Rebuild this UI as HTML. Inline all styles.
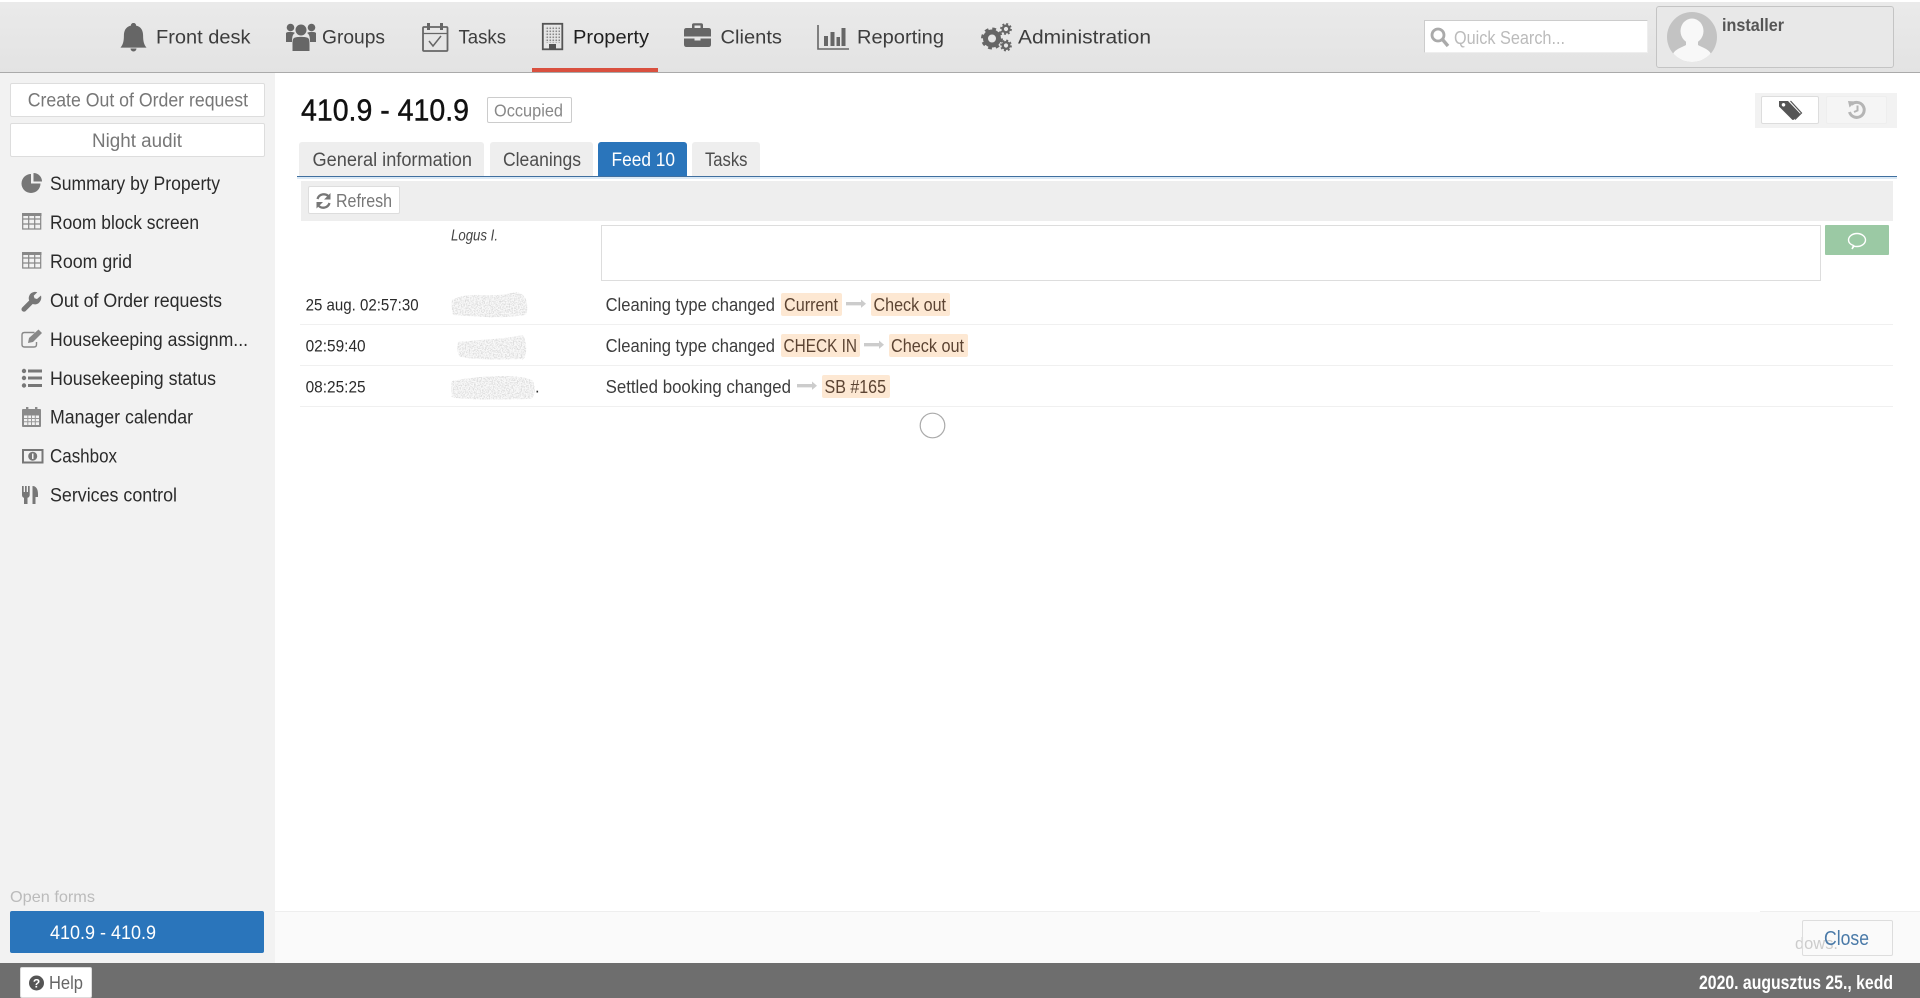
<!DOCTYPE html>
<html lang="en"><head><meta charset="utf-8"><title>410.9 - 410.9</title>
<style>
html,body{margin:0;padding:0;background:#fff;width:1920px;height:998px;overflow:hidden}
.b{position:absolute;box-sizing:border-box}
svg.o{position:absolute;left:0;top:0}
text{font-family:"Liberation Sans",sans-serif;font-size:19px;fill:#333}
.nav{font-size:19.5px;fill:#3d3d3d}
.side{fill:#2b2b2b}
.btn{fill:#777}
.tab{fill:#4d4d4d}
.row{font-size:18.5px;fill:#3d3d3d}
.bd{font-size:18.5px;fill:#5c4433}
.dt{font-size:16.5px;fill:#2b2b2b}
.i{fill:#777}
.n{fill:#666}
</style></head><body>
<!-- header -->
<div class="b" style="left:0;top:2px;width:1920px;height:71px;background:linear-gradient(#eaeaea,#e3e3e3);border-bottom:1.5px solid #aaa"></div>
<div class="b" style="left:532px;top:68px;width:126px;height:4px;background:#d9503f"></div>
<div class="b" style="left:1424px;top:20px;width:224px;height:33px;background:#fff;border:1px solid #ccc;border-right-color:#eee;border-bottom-color:#eee"></div>
<div class="b" style="left:1656px;top:6px;width:238px;height:62px;border:1px solid #c4c4c4;border-radius:3px;background:#e8e8e8"></div>
<!-- sidebar -->
<div class="b" style="left:0;top:73px;width:275px;height:890px;background:#f2f2f2"></div>
<div class="b" style="left:10px;top:83px;width:255px;height:34px;background:#fff;border:1px solid #ddd;border-radius:2px"></div>
<div class="b" style="left:10px;top:123px;width:255px;height:34px;background:#fff;border:1px solid #ddd;border-radius:2px"></div>
<div class="b" style="left:10px;top:911px;width:254px;height:42px;background:#2a75bb;border-radius:2px"></div>
<!-- title tools -->
<div class="b" style="left:487px;top:97px;width:85px;height:26px;border:1px solid #ccc;border-radius:2px"></div>
<div class="b" style="left:1755px;top:93px;width:142px;height:35px;background:#f2f2f2"></div>
<div class="b" style="left:1761px;top:96px;width:58px;height:28px;background:#fff;border:1px solid #ddd;border-radius:2px"></div>
<div class="b" style="left:1826px;top:96px;width:61px;height:28px;background:#f5f5f5;border:1px solid #eee;border-radius:2px"></div>
<!-- tabs -->
<div class="b" style="left:299px;top:142px;width:185px;height:34px;background:#eee;border-radius:3px 3px 0 0"></div>
<div class="b" style="left:490px;top:142px;width:103px;height:34px;background:#eee;border-radius:3px 3px 0 0"></div>
<div class="b" style="left:598px;top:142px;width:89px;height:34px;background:#2a75bb;border-radius:3px 3px 0 0"></div>
<div class="b" style="left:692px;top:142px;width:68px;height:34px;background:#eee;border-radius:3px 3px 0 0"></div>
<div class="b" style="left:297px;top:176px;width:1600px;height:1px;background:#3f6f9f"></div>
<div class="b" style="left:297px;top:177px;width:1600px;height:2px;background:#dbe9f5"></div>
<div class="b" style="left:301px;top:181px;width:1592px;height:40px;background:#eee"></div>
<div class="b" style="left:308px;top:186px;width:92px;height:28px;background:#fff;border:1px solid #ddd;border-radius:2px"></div>
<!-- comment -->
<div class="b" style="left:601px;top:225px;width:1220px;height:56px;background:#fff;border:1.5px solid #ddd"></div>
<div class="b" style="left:1825px;top:225px;width:64px;height:30px;background:#9bc9a4;border-radius:1px"></div>
<!-- feed -->
<div class="b" style="left:300px;top:324px;width:1593px;height:1px;background:#f0f0f0"></div>
<div class="b" style="left:300px;top:365px;width:1593px;height:1px;background:#f0f0f0"></div>
<div class="b" style="left:300px;top:406px;width:1593px;height:1px;background:#f0f0f0"></div>
<div class="b" style="left:781px;top:293px;width:61px;height:23px;background:#fde8d3;border-radius:2px"></div>
<div class="b" style="left:871px;top:293px;width:79px;height:23px;background:#fde8d3;border-radius:2px"></div>
<div class="b" style="left:781px;top:334px;width:79px;height:23px;background:#fde8d3;border-radius:2px"></div>
<div class="b" style="left:889px;top:334px;width:79px;height:23px;background:#fde8d3;border-radius:2px"></div>
<div class="b" style="left:822px;top:375px;width:68px;height:23px;background:#fde8d3;border-radius:2px"></div>
<!-- footer -->
<div class="b" style="left:275px;top:911px;width:1645px;height:52px;background:#fafafa;border-top:1px solid #eee"></div>
<div class="b" style="left:1540px;top:904px;width:220px;height:8px;background:#fff;border-radius:10px 10px 0 0"></div>
<svg class="o" width="1920" height="998"><text x="1795" y="949" style="font-size:17px;fill:#ccc" textLength="43" lengthAdjust="spacingAndGlyphs">dows.</text></svg>
<div class="b" style="left:1802px;top:920px;width:91px;height:36px;border:1px solid #ddd;border-radius:2px"></div>
<div class="b" style="left:0;top:963px;width:1920px;height:35px;background:#6e6e6e"></div>
<div class="b" style="left:20px;top:967px;width:72px;height:31px;background:#fff;border:1px solid #ddd;border-radius:2px"></div>

<svg class="o" width="1920" height="998" viewBox="0 0 1920 998">
<defs>
<pattern id="w" width="3" height="3" patternUnits="userSpaceOnUse"><rect x=".5" y=".5" width="1.6" height="1.6" fill="#888"/></pattern>
<clipPath id="av"><circle cx="1692" cy="37" r="25"/></clipPath>
<filter id="nz" x="0" y="0" width="100%" height="100%"><feTurbulence type="fractalNoise" baseFrequency=".75" numOctaves="2" seed="4" result="t"/><feColorMatrix in="t" type="matrix" values="0 0 0 0 .72  0 0 0 0 .72  0 0 0 0 .72  0 0 0 4 -1.7" result="c"/><feComposite in="c" in2="SourceGraphic" operator="in"/></filter>
</defs>

<!-- nav text -->
<text class="nav" x="156" y="43.5" textLength="94.5" lengthAdjust="spacingAndGlyphs">Front desk</text>
<text class="nav" x="322" y="43.5" textLength="63" lengthAdjust="spacingAndGlyphs">Groups</text>
<text class="nav" x="458.5" y="43.5" textLength="47.5" lengthAdjust="spacingAndGlyphs">Tasks</text>
<text class="nav" x="573" y="43.5" textLength="76" lengthAdjust="spacingAndGlyphs" style="fill:#1f1f1f">Property</text>
<text class="nav" x="720.5" y="43.5" textLength="61.5" lengthAdjust="spacingAndGlyphs">Clients</text>
<text class="nav" x="857" y="43.5" textLength="87" lengthAdjust="spacingAndGlyphs">Reporting</text>
<text class="nav" x="1018" y="43.5" textLength="133" lengthAdjust="spacingAndGlyphs">Administration</text>

<!-- nav icons -->
<path class="n" d="M133.5 23c-1.6 0-2.6 1-2.6 2.6-5 1-7 5-7 10 0 6-1 9-3.4 12h26c-2.4-3-3.4-6-3.4-12 0-5-2-9-7-10 0-1.6-1-2.6-2.6-2.6zM130.5 48.5a3 3 0 0 0 6 0z"/>
<g class="n"><circle cx="301" cy="30" r="5.5"/><circle cx="290.5" cy="27.500" r="3.8"/><circle cx="311.5" cy="27.500" r="3.8"/><path d="M294 38c2-1.5 12-1.5 14 0 1.5 1 1.5 4 1.5 7v6h-17v-6c0-3 0-6 1.5-7zM286 33c1-1.500 7-1.500 9 0-2 1-3 3-3 9h-6zM316 33c-1-1.500-7-1.500-9 0 2 1 3 3 3 9h6z"/></g>
<g fill="none" stroke="#666"><rect x="423" y="27" width="24.5" height="24" rx="1" stroke-width="1.8"/><path d="M428.5 23v7M441.5 23v7" stroke-width="3"/><path d="M423 33.5h24" stroke-width="1.2"/><path d="M429 41l4 5 8-10" stroke-width="1.5"/></g>
<g><rect x="542.8" y="23.8" width="19.5" height="25.5" fill="none" stroke="#555" stroke-width="1.8"/><rect x="545" y="26" width="15" height="17" fill="url(#w)"/><rect x="549" y="44" width="7" height="6" fill="#555"/></g>
<g><path class="n" d="M684 30.5q0-2.5 2.500-2.500h5.500v-3q0-1.800 1.800-1.800h7.400q1.800 0 1.800 1.800v3h5.500q2.500 0 2.500 2.500v6h-27zM694.500 25.500v2.500h6v-2.500zM684 38.500h10.500v2h6v-2h10.500v6q0 2.500-2.500 2.500h-22q-2.500 0-2.500-2.500z"/></g>
<g class="n"><path d="M818 25v24h31" fill="none" stroke="#666" stroke-width="1.6"/><rect x="824" y="36" width="4" height="10"/><rect x="830.5" y="32" width="4" height="14"/><rect x="836.5" y="37" width="3.5" height="9"/><rect x="841.5" y="28" width="4" height="18"/></g>
<g fill="none" stroke="#666"><circle cx="992" cy="38.5" r="6.5" stroke-width="5"/><circle cx="992" cy="38.5" r="9.5" stroke-width="3" stroke-dasharray="3.7 3.76"/><circle cx="1006" cy="29" r="3.3" stroke-width="2.4"/><circle cx="1006" cy="29" r="5" stroke-width="1.8" stroke-dasharray="2 1.93"/><circle cx="1006" cy="45.5" r="3.3" stroke-width="2.4"/><circle cx="1006" cy="45.5" r="5" stroke-width="1.8" stroke-dasharray="2 1.93"/></g>

<!-- search + user -->
<circle cx="1438" cy="35" r="6" fill="none" stroke="#aaa" stroke-width="2.8"/><path d="M1442.5 39.5l5.5 6.5" stroke="#aaa" stroke-width="3.4"/>
<text x="1454" y="44" style="font-size:18.5px;fill:#bbb" textLength="111" lengthAdjust="spacingAndGlyphs">Quick Search...</text>
<circle cx="1692" cy="37" r="25" fill="#c3c3c3"/>
<g clip-path="url(#av)" fill="#f8f8f8"><ellipse cx="1692" cy="31" rx="11.5" ry="12.5"/><path d="M1686 41h12v4c3 2 11 4 13 9l1 10h-40l1-10c2-5 10-7 13-9z"/></g>
<text x="1722" y="31" style="font-size:17.5px;font-weight:bold;fill:#555" textLength="62" lengthAdjust="spacingAndGlyphs">installer</text>

<!-- sidebar -->
<text class="btn" x="27.7" y="106.5" textLength="220.3" lengthAdjust="spacingAndGlyphs">Create Out of Order request</text>
<text class="btn" x="92" y="147" textLength="90" lengthAdjust="spacingAndGlyphs">Night audit</text>
<text class="side" x="50" y="190" textLength="170" lengthAdjust="spacingAndGlyphs">Summary by Property</text>
<text class="side" x="50" y="229" textLength="149" lengthAdjust="spacingAndGlyphs">Room block screen</text>
<text class="side" x="50" y="268" textLength="82" lengthAdjust="spacingAndGlyphs">Room grid</text>
<text class="side" x="50" y="307" textLength="172" lengthAdjust="spacingAndGlyphs">Out of Order requests</text>
<text class="side" x="50" y="346" textLength="198" lengthAdjust="spacingAndGlyphs">Housekeeping assignm...</text>
<text class="side" x="50" y="385" textLength="166" lengthAdjust="spacingAndGlyphs">Housekeeping status</text>
<text class="side" x="50" y="423.7" textLength="143" lengthAdjust="spacingAndGlyphs">Manager calendar</text>
<text class="side" x="50" y="462.6" textLength="67" lengthAdjust="spacingAndGlyphs">Cashbox</text>
<text class="side" x="50" y="501.5" textLength="127" lengthAdjust="spacingAndGlyphs">Services control</text>

<!-- sidebar icons -->
<path class="i" d="M31 174a9.5 9.5 0 1 0 9.5 9.5h-9.5zM33.500 173a8.500 8.500 0 0 1 8.500 8.500h-8.500z"/>
<g fill="none" stroke="#888" stroke-width="1.2"><path d="M22.700 214h18v15h-18zM22.700 219h18M22.700 224h18M28.700 214v15M34.700 214v15"/><path d="M22.700 253h18v15h-18zM22.700 258h18M22.700 263h18M28.700 253v15M34.700 253v15"/></g>
<rect class="i" x="22" y="213" width="19.5" height="3" style="fill:#888"/><rect x="22" y="252" width="19.5" height="3" style="fill:#888"/>
<path class="i" d="M41 295.500l-4 3.500-2.500-.8-.8-2.500 3.600-3.500c-3-.8-6.300.2-7.800 3-1 1.800-1 3.700-.3 5.300l-7 7c-1 1-1 2.600 0 3.500s2.500 1 3.500 0l7-7c2 .7 4 .4 5.800-.8 2.200-1.800 3.300-4.600 2.500-7.700z"/>
<path fill="none" stroke="#888" stroke-width="1.4" d="M36.500 342v2.500q0 2.500-2.500 2.500h-9.500q-2.500 0-2.500-2.500v-9.500q0-2.500 2.500-2.500h10"/>
<path class="i" d="M28 343l1-5 9.500-8.500 3.500 3.500-9 9z" style="fill:#888"/>
<g class="i"><circle cx="24" cy="371" r="2.2"/><circle cx="24" cy="378" r="2.2"/><circle cx="24" cy="385.5" r="2.2"/><rect x="28" y="369.5" width="14" height="3"/><rect x="28" y="376.5" width="14" height="3"/><rect x="28" y="384" width="14" height="3"/></g>
<g><rect x="22" y="409" width="19" height="18" rx="1" fill="#8a8a8a"/><path d="M24 415.500h15v9.500h-15z" fill="#f2f2f2"/><path d="M24 418.500h15M24 421.800h15M27.800 415v10M31.500 415v10M35.300 415v10" stroke="#999" stroke-width="1"/><rect x="26" y="407" width="2.400" height="5" fill="#8a8a8a"/><rect x="35" y="407" width="2.400" height="5" fill="#8a8a8a"/></g>
<g><rect x="23" y="450" width="19.500" height="12.500" fill="#f2f2f2" stroke="#777" stroke-width="2"/><circle cx="32.700" cy="456.200" r="4.500" fill="#777"/><rect x="32" y="453.500" width="1.500" height="5.500" fill="#f2f2f2"/></g>
<path class="i" d="M22 486h1.700v6h1.300v-6h1.700v6h1.300v-6h1.700v9c0 1.500-1 2.500-2.200 2.800V504h-3.500v-6.200c-1.200-.3-2-1.300-2-2.800zM32.500 504v-18c3.500 0 5.500 3 5.500 8v3h-2.500v7z"/>

<!-- title -->
<text x="301" y="120.5" style="font-size:31px;fill:#111;stroke:#111;stroke-width:.45" textLength="168" lengthAdjust="spacingAndGlyphs">410.9 - 410.9</text>
<text x="494" y="116.7" style="font-size:17.5px;fill:#888" textLength="69" lengthAdjust="spacingAndGlyphs">Occupied</text>
<path fill="#555" fill-rule="evenodd" d="M1779 101h9l11.500 12q1 1 0 2l-5.500 4.500q-1 1-2 0l-13-13zM1783.500 103a1.800 1.800 0 1 0 .01 0z"/>
<path fill="none" stroke="#555" stroke-width="1.200" d="M1790.500 101l11 12-6.500 6.500"/>
<path fill="none" stroke="#b5b5b5" stroke-width="3" d="M1851.500 104.500a7.500 7.500 0 1 1 -2 7.500"/><path fill="none" stroke="#b5b5b5" stroke-width="2" d="M1857.500 105.500v5l-3.500 1.500"/><path fill="#b5b5b5" d="M1848 101l7.500 .5-6 6z"/>

<!-- tabs text -->
<text class="tab" x="312.500" y="166" textLength="159.500" lengthAdjust="spacingAndGlyphs">General information</text>
<text class="tab" x="503" y="166" textLength="78" lengthAdjust="spacingAndGlyphs">Cleanings</text>
<text x="611.500" y="166" style="fill:#fff" textLength="63.500" lengthAdjust="spacingAndGlyphs">Feed 10</text>
<text class="tab" x="705" y="166" textLength="42.500" lengthAdjust="spacingAndGlyphs">Tasks</text>

<!-- refresh -->
<path fill="none" stroke="#777" stroke-width="2.300" d="M317.500 199a6.500 6.500 0 0 1 11.500-2M329.500 203a6.500 6.500 0 0 1-11.500 2"/><path fill="#777" d="M330.500 193v6.500h-6.500zM316.500 208.500v-6.500h6.500z"/>
<text class="btn" x="336" y="207" style="font-size:18.5px" textLength="56" lengthAdjust="spacingAndGlyphs">Refresh</text>

<text x="451" y="240.700" style="font-size:15.500px;font-style:italic;fill:#444" textLength="47" lengthAdjust="spacingAndGlyphs">Logus I.</text>
<path fill="none" stroke="#fff" stroke-width="1.400" d="M1852 249l1.500-3.500c-3-1-5-3-5-5.500 0-3.500 3.800-6.500 8.500-6.500s8.500 3 8.500 6.500-3.800 6.500-8.500 6.500c-1 0-2 0-3-.3z"/>

<!-- rows -->
<text class="dt" x="305.600" y="310.700" textLength="113" lengthAdjust="spacingAndGlyphs">25 aug. 02:57:30</text>
<text class="dt" x="305.600" y="351.700" textLength="60" lengthAdjust="spacingAndGlyphs">02:59:40</text>
<text class="dt" x="305.600" y="392.700" textLength="60" lengthAdjust="spacingAndGlyphs">08:25:25</text>
<path fill="#f9f9f9" d="M452 300q10-6 30-5t34-3q10 2 11 12t-2 11q-20 3-40 2t-32-2q-2-8-1-15z"/>
<path filter="url(#nz)" fill="#fff" d="M452 300q10-6 30-5t34-3q10 2 11 12t-2 11q-20 3-40 2t-32-2q-2-8-1-15z"/>
<path fill="#f9f9f9" d="M458 342q20-2 35-3t30-4q4 8 3 17t-5 7q-25 1-42 0t-20-3q-3-8-1-14z"/>
<path filter="url(#nz)" fill="#fff" d="M458 342q20-2 35-3t30-4q4 8 3 17t-5 7q-25 1-42 0t-20-3q-3-8-1-14z"/>
<path fill="#f9f9f9" d="M452 381q25-5 50-5t31 5q3 9 1 14t-6 4q-40 1-60 0t-16-3q-2-8 0-15z"/>
<path filter="url(#nz)" fill="#fff" d="M452 381q25-5 50-5t31 5q3 9 1 14t-6 4q-40 1-60 0t-16-3q-2-8 0-15z"/>
<text class="dt" x="535" y="392.700">.</text>

<text class="row" x="605.600" y="311" textLength="169.400" lengthAdjust="spacingAndGlyphs">Cleaning type changed</text>
<text class="bd" x="784" y="311" textLength="54" lengthAdjust="spacingAndGlyphs">Current</text>
<text class="bd" x="873.500" y="311" textLength="72.500" lengthAdjust="spacingAndGlyphs">Check out</text>
<text class="row" x="605.600" y="352" textLength="169.400" lengthAdjust="spacingAndGlyphs">Cleaning type changed</text>
<text class="bd" x="783.500" y="352" textLength="73.500" lengthAdjust="spacingAndGlyphs">CHECK IN</text>
<text class="bd" x="891" y="352" textLength="73" lengthAdjust="spacingAndGlyphs">Check out</text>
<text class="row" x="605.600" y="393" textLength="185.400" lengthAdjust="spacingAndGlyphs">Settled booking changed</text>
<text class="bd" x="824.500" y="393" textLength="61.500" lengthAdjust="spacingAndGlyphs">SB #165</text>
<g fill="#ccc"><path d="M846 302h15v-2.500l5 4.200-5 4.200v-2.500h-15z"/><path d="M864 343h15v-2.500l5 4.200-5 4.200v-2.500h-15z"/><path d="M797 384h15v-2.500l5 4.200-5 4.200v-2.500h-15z"/></g>
<circle cx="932.500" cy="425.500" r="12.300" fill="#fff" stroke="#aaa" stroke-width="1.200"/>

<!-- footer -->
<text x="10" y="902" style="font-size:16px;fill:#bbb" textLength="85" lengthAdjust="spacingAndGlyphs">Open forms</text>
<text x="50" y="939" style="fill:#fff" textLength="106" lengthAdjust="spacingAndGlyphs">410.9 - 410.9</text>
<text x="1824" y="945" style="font-size:20px;fill:#4a7aa8" textLength="45" lengthAdjust="spacingAndGlyphs">Close</text>
<circle cx="36.500" cy="983" r="7.500" fill="#555"/>
<text x="36.500" y="987.500" text-anchor="middle" style="font-size:12px;font-weight:bold;fill:#fff">?</text>
<text x="49" y="989" style="font-size:18.500px;fill:#666" textLength="34" lengthAdjust="spacingAndGlyphs">Help</text>
<text x="1699" y="989" style="font-weight:bold;fill:#fff" textLength="194" lengthAdjust="spacingAndGlyphs">2020. augusztus 25., kedd</text>
</svg>
</body></html>
